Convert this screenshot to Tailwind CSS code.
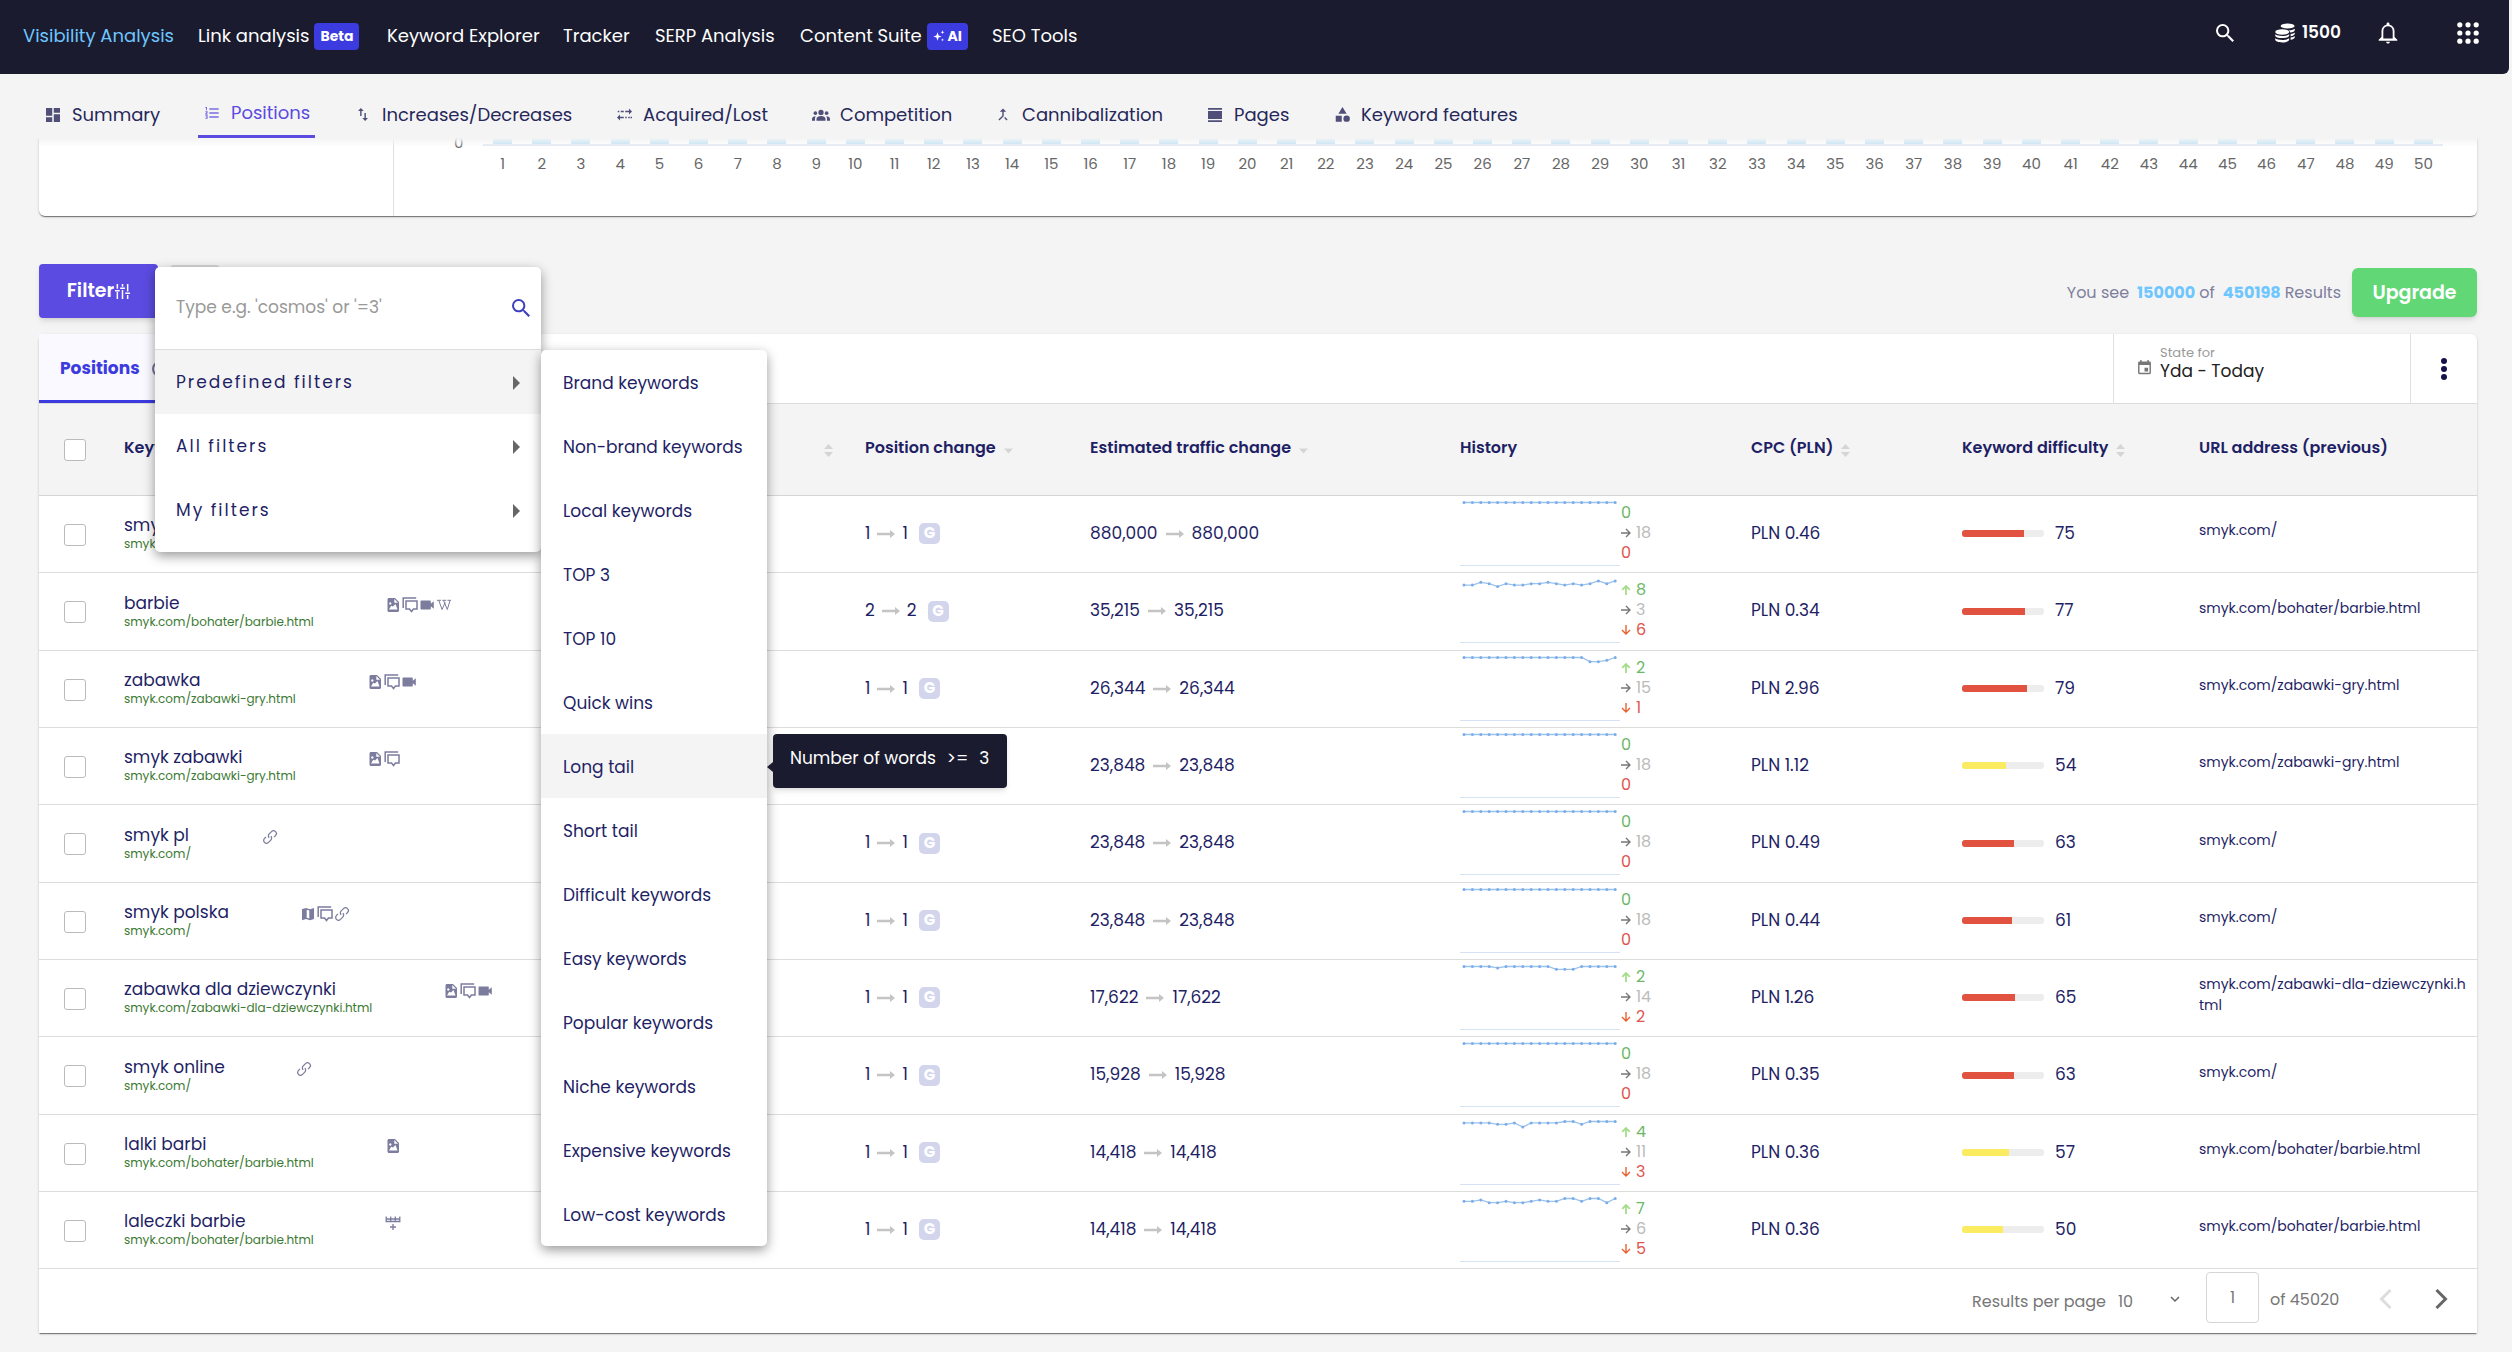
<!DOCTYPE html>
<html lang="en">
<head>
<meta charset="utf-8">
<title>Visibility Analysis – Positions</title>
<script src="https://cdn.jsdelivr.net/npm/@tailwindcss/browser@4"></script>
</head>
<body class="min-h-screen bg-[#f4f4f4] font-['Poppins','Inter',sans-serif] text-[17px] text-[#1f1f66]">

<svg class="hidden" aria-hidden="true">
  <symbol id="search" viewBox="3 3 17.5 17.5"><path d="M15.5 14h-.79l-.28-.27A6.47 6.47 0 0 0 16 9.5 6.5 6.5 0 1 0 9.5 16c1.61 0 3.09-.59 4.23-1.57l.27.28v.79l5 4.99L20.49 19l-4.99-5zm-6 0C7.01 14 5 11.99 5 9.5S7.01 5 9.5 5 14 7.01 14 9.5 11.99 14 9.5 14z"/></symbol>
  <symbol id="coins" viewBox="0 0 20 20"><ellipse cx="12.6" cy="3" rx="7" ry="2.6"/><path d="M14 7.2c2.700 0 5-.6 5.800-1.500v1.200c0 1.300-2 2.300-4.600 2.600-.3-.9-.9-1.600-1.200-2.300zM15.600 11c2-.2 3.600-.8 4.200-1.500v1.200c0 1.200-1.800 2.200-4.200 2.500zM15.600 14.600c2-.2 3.600-.8 4.200-1.500v1.200c0 1.200-1.800 2.200-4.200 2.500z"/><ellipse cx="7.200" cy="9" rx="7" ry="2.700"/><path d="M.2 11.300c1.300 1.200 4 1.700 7 1.700s5.700-.5 7-1.700v1.100c0 1.600-3.100 2.700-7 2.700s-7-1.100-7-2.700zM.2 15.200c1.300 1.200 4 1.700 7 1.700s5.700-.5 7-1.700v1.300c0 1.700-3.100 2.900-7 2.900s-7-1.200-7-2.900z"/></symbol>
  <symbol id="bell" viewBox="0 0 20 22"><path d="M10 .5c.9 0 1.500.6 1.500 1.500v.7c3 .6 5 3.100 5 6.200v6.200l2.800 2.600v1H.7v-1l2.800-2.600V8.900c0-3.100 2-5.600 5-6.200V2c0-.9.600-1.500 1.500-1.500zM5.300 16.500h9.400V9c0-2.700-1.900-4.700-4.700-4.700S5.300 6.300 5.300 9zM8.100 19.700h3.800c0 1-.9 1.800-1.900 1.800s-1.900-.8-1.900-1.800z"/></symbol>
  <symbol id="apps" viewBox="0 0 22 22"><circle cx="2.800" cy="2.800" r="2.600"/><circle cx="11" cy="2.800" r="2.600"/><circle cx="19.200" cy="2.800" r="2.600"/><circle cx="2.800" cy="11" r="2.600"/><circle cx="11" cy="11" r="2.600"/><circle cx="19.200" cy="11" r="2.600"/><circle cx="2.800" cy="19.200" r="2.600"/><circle cx="11" cy="19.200" r="2.600"/><circle cx="19.200" cy="19.200" r="2.600"/></symbol>
  <symbol id="sparkle" viewBox="0 0 12 12"><path d="M4.500 2.200 5.600 5.400 8.600 6.500 5.600 7.600 4.500 10.800 3.400 7.600.3 6.500 3.400 5.400zM9.500.3l.5 1.500 1.500.5-1.500.5-.5 1.500L9 2.800l-1.500-.5L9 1.800zM9.500 8.300l.4 1.200 1.200.4-1.200.4-.4 1.200-.4-1.200-1.200-.4 1.200-.4z"/></symbol>
  <symbol id="dashboard" viewBox="3 3 18 18"><path d="M3 13h8V3H3v10zm0 8h8v-6H3v6zm10 0h8V11h-8v10zm0-18v6h8V3h-8z"/></symbol>
  <symbol id="list" viewBox="2 3 20 18"><path d="M2 17h2v.5H3v1h1v.5H2v1.500h3.500V15.500H2zm1-9h1.500V3H2v1.500h1zm-1 3h1.800L2 13.100V14.500h3.500V13H4l1.500-1.900V9.500H2zM8 5v2h14V5zm0 14h14v-2H8zm0-6h14v-2H8z"/></symbol>
  <symbol id="updown" viewBox="5 3 14 18"><path d="M16 17.010V10h-2v7.010h-3L15 21l4-3.990h-3zM9 3L5 6.990h3V14h2V6.990h3L9 3z"/></symbol>
  <symbol id="exchange" viewBox="2 4 20 16"><path d="M22 8l-4-4v3h-5v2h5v3zM2 16l4 4v-3h5v-2H6v-3zM3 7h2v2H3zM7 7h4v2H7zM13 15h2v2h-2zM17 15h2v2h-2zM20 15h2v2h-2z"/></symbol>
  <symbol id="people" viewBox="0 4 24 15"><circle cx="12" cy="8" r="3.500"/><circle cx="4.500" cy="9" r="2.400"/><circle cx="19.500" cy="9" r="2.400"/><path d="M6 19v-2.500c0-2.300 2.700-3.800 6-3.800s6 1.500 6 3.800V19zM0 19v-2.300c0-2 2-3.300 5-3.400-.7.900-1 1.900-1 3.200V19zM24 19v-2.300c0-2-2-3.300-5-3.400.7.900 1 1.900 1 3.200V19z"/></symbol>
  <symbol id="merge" viewBox="5 3 14 18"><path d="M17 20.410L18.410 19 15 15.590 13.590 17 17 20.410zM7.500 8H11v5.590L5.590 19 7 20.410l6-6V8h3.500L12 3.500 7.500 8z"/></symbol>
  <symbol id="pages" viewBox="3 3 18 18"><path d="M3 3h18v2.200H3zM3 18.800h18V21H3zM3 7h18v10H3z"/></symbol>
  <symbol id="shapes" viewBox="2 2 20 20"><path d="M12 2l5.500 9h-11zM3 13.500h8v8H3z"/><circle cx="17.500" cy="17.500" r="4.300"/></symbol>
  <symbol id="sliders" viewBox="0 0 16 16"><path d="M1.700 0h1.600v5H1.700zM1.700 8.500h1.600V16H1.700zM0 6.300h5v1.700H0zM7.200 0h1.600v3H7.200zM5.500 3.600h5v1.700h-5zM7.200 6.500h1.600V16H7.200zM12.700 0h1.600v8h-1.600zM11 9h5v1.700h-5zM12.700 11.800h1.600V16h-1.600z"/></symbol>
  <symbol id="calendar" viewBox="3 1 18 21"><path d="M17 12h-5v5h5v-5zM16 1v2H8V1H6v2H5a2 2 0 0 0-2 2v14c0 1.100.9 2 2 2h14c1.100 0 2-.9 2-2V5c0-1.100-.9-2-2-2h-1V1h-2zm3 18H5V8h14v11z"/></symbol>
  <symbol id="sort" viewBox="0 0 9 13"><path d="M4.500 0 9 5H0zM4.500 13 9 8H0z"/></symbol>
  <symbol id="sortdown" viewBox="0 0 9 13"><path d="M4.500 11.500 9 6.500H0z"/></symbol>
  <symbol id="arrow" viewBox="0 0 18 8"><path d="M0 2.800h13V0l5 4-5 4V5.200H0z"/></symbol>
  <symbol id="right" viewBox="0 0 10 10"><path d="M0 5h9M5 1l4 4-4 4" fill="none" stroke="currentColor" stroke-width="1.400"/></symbol>
  <symbol id="up" viewBox="0 0 10 10"><path d="M5 10V1M1.200 4.800 5 1l3.800 3.800" fill="none" stroke="currentColor" stroke-width="1.800"/></symbol>
  <symbol id="down" viewBox="0 0 10 10"><path d="M5 0v9M1 5l4 4 4-4" fill="none" stroke="currentColor" stroke-width="1.400"/></symbol>
  <symbol id="image" viewBox="0 0 16 16"><path fill-rule="evenodd" d="M4 1h6l4 4v8.500c0 .8-.7 1.500-1.500 1.500h-8.500c-.8 0-1.500-.7-1.500-1.500v-11C2.500 1.700 3.200 1 4 1zm5.300 1v3.700H13zM4 12.500h8.500L10.500 7 8 9.500 6.200 8.700zM5.300 5.300a1.200 1.200 0 1 0 .01 0z"/></symbol>
  <symbol id="chat" viewBox="0 0 16 16"><path d="M1.200 11V1h13M4 4h11v8h-3.500L9.500 14.500 7.500 12H4z" fill="none" stroke="currentColor" stroke-width="1.500"/></symbol>
  <symbol id="video" viewBox="0 0 16 16"><path d="M2.500 3.500h8.300c.6 0 1 .4 1 1v2.300l3-2.500v7.400l-3-2.500v2.300c0 .6-.4 1-1 1H2.500c-.6 0-1-.4-1-1v-7c0-.6.4-1 1-1z"/></symbol>
  <symbol id="wiki" viewBox="0 0 16 16"><path d="M1 3.300h4M6.300 3.300h4M11.500 3.300H15M2.800 3.300 6 12.500l3.200-7M7.500 3.300l3.800 9.200 2.800-9.200" fill="none" stroke="currentColor"/></symbol>
  <symbol id="link" viewBox="0 0 16 16"><path d="M7.200 8.900a2.800 2.800 0 0 1 0-4l2.300-2.300a2.800 2.800 0 0 1 4 4l-1.400 1.400M8.800 7.100a2.800 2.800 0 0 1 0 4l-2.300 2.300a2.800 2.800 0 0 1-4-4l1.400-1.400" fill="none" stroke="currentColor" stroke-width="1.300"/></symbol>
  <symbol id="map" viewBox="0 0 16 16"><path fill-rule="evenodd" d="M2.500 3 6 2l4 1.200 4-1.200v11l-4 1.300L6 13l-4 1.300V3.200zM6.700 3.700v8l2.600.8v-8z"/></symbol>
  <symbol id="grid" viewBox="0 0 16 16"><path d="M1.200 1.500v5h13.600v-5M5.700 1.500v5M10.300 1.500v5M1.200 4h13.600M8 9v6M5 12h6" fill="none" stroke="currentColor" stroke-width="1.300"/></symbol>
</svg>

<header class="mr-[3px] flex h-[74px] items-center justify-between rounded-br-md bg-[#1a1b2e] pr-[30px] pb-[2px] pl-[23px] text-white">
  <nav class="flex items-center text-lg">
    <a href="#" class="w-[175px] whitespace-nowrap text-[#6ec6ff]">Visibility Analysis</a>
    <a href="#" class="flex w-[189px] items-center gap-[5px] whitespace-nowrap">Link analysis <span class="flex h-[27px] w-[45px] items-center justify-center rounded-[4px] bg-[#3b3be0] text-sm font-bold">Beta</span></a>
    <a href="#" class="w-[176px] whitespace-nowrap">Keyword Explorer</a>
    <a href="#" class="w-[92px] whitespace-nowrap">Tracker</a>
    <a href="#" class="w-[145px] whitespace-nowrap">SERP Analysis</a>
    <a href="#" class="flex w-[192px] items-center gap-[5px] whitespace-nowrap">Content Suite <span class="flex h-[27px] w-[41px] items-center justify-center gap-[3px] rounded-[4px] bg-[#3b3be0] text-sm font-bold"><svg class="size-3 fill-current"><use href="#sparkle"/></svg>AI</span></a>
    <a href="#" class="whitespace-nowrap">SEO Tools</a>
  </nav>
  <div class="flex items-center pb-[7px]">
    <button aria-label="Search" class="mr-[41px]"><svg class="size-[18px] fill-current"><use href="#search"/></svg></button>
    <a href="#" class="mr-[37px] flex items-center gap-[7px] font-semibold"><svg class="size-[20px] fill-current"><use href="#coins"/></svg>1500</a>
    <button aria-label="Notifications" class="mr-[59px]"><svg class="h-[22px] w-5 fill-current"><use href="#bell"/></svg></button>
    <button aria-label="Apps"><svg class="size-[22px] fill-current"><use href="#apps"/></svg></button>
  </div>
</header>

<nav class="flex h-16 items-end pl-[37px] text-lg text-[#26275a]" id="tabs"></nav>

<main class="mr-[35px] ml-[39px]">
  <section class="relative flex h-[78px] overflow-hidden rounded-b-md bg-white shadow-[0_2px_1px_-1px_rgba(0,0,0,0.35),0_1px_1px_rgba(0,0,0,0.2),0_1px_3px_rgba(0,0,0,0.15)] [clip-path:inset(0_-4px_-6px_-4px)]">
    <div class="w-[355px] shrink-0 border-r border-[#e0e0e0]"></div>
    <div class="flex flex-1 pr-[34px] pl-[60px] text-[15px] leading-5 text-[#666]">
      <span class="mt-[-2px] w-[29px] shrink-0 leading-[14px]">0</span>
      <div class="grid h-[38px] flex-1 grid-cols-[repeat(50,minmax(0,1fr))]" id="axis"></div>
    </div>
    <div class="absolute inset-x-0 top-0 h-[9px] bg-linear-to-b from-[#f4f4f4] to-[#f4f4f4]/0"></div>
  </section>

  <div class="relative mt-12 flex h-[70px] items-start justify-between">
    <div class="flex gap-3">
      <button class="flex h-[54px] w-[119px] items-center justify-center gap-px rounded-[4px] bg-[#5b4be0] text-[19px] font-semibold text-white shadow-md">Filter<svg class="size-[15px] fill-current"><use href="#sliders"/></svg></button>
      <button aria-label="Saved filters" class="mt-px h-[52px] w-[50px] rounded-[4px] border-2 border-[#d5d5d5]"></button>
    </div>
    <div class="mt-1 flex items-center gap-[11px]">
      <p class="flex gap-1 text-base text-[#7f7f9d]">You see <b class="ml-1 font-bold text-[#6ec6ff]">150000</b> of <b class="ml-1 font-bold text-[#6ec6ff]">450198</b> Results</p>
      <button class="h-[49px] w-[125px] rounded-md bg-[#62d775] pt-px text-[19px] font-semibold text-white shadow-md">Upgrade</button>
    </div>

    <div class="absolute top-[3px] left-[116px] z-20 w-[386px] rounded-[5px] bg-white pb-[10px] shadow-[0_4px_12px_rgba(0,0,0,0.4)]">
      <label class="flex h-[83px] items-center justify-between border-b border-[#ddd] pr-[11px] pl-[21px]">
        <input type="text" aria-label="Filter phrase" placeholder="Type e.g. 'cosmos' or '=3'" class="mb-px w-[300px] outline-none placeholder:text-[#999]">
        <svg class="size-[18px] fill-[#3b3fc0]"><use href="#search"/></svg>
      </label>
      <button class="flex h-16 w-full items-center justify-between bg-[#f4f4f4] px-[21px] pt-[2px] tracking-[2px]">Predefined filters<svg viewBox="0 0 7 14" class="h-[14px] w-[7px] fill-[#666]"><path d="M0 0l7 7-7 7z"/></svg></button>
      <button class="flex h-16 w-full items-center justify-between px-[21px] pt-[2px] tracking-[2px]">All filters<svg viewBox="0 0 7 14" class="h-[14px] w-[7px] fill-[#666]"><path d="M0 0l7 7-7 7z"/></svg></button>
      <button class="flex h-16 w-full items-center justify-between px-[21px] pt-[2px] tracking-[2px]">My filters<svg viewBox="0 0 7 14" class="h-[14px] w-[7px] fill-[#666]"><path d="M0 0l7 7-7 7z"/></svg></button>

      <div id="submenu" class="absolute top-[83px] left-full w-[226px] rounded-[5px] bg-white shadow-[0_4px_12px_rgba(0,0,0,0.4)]"></div>
      <div role="tooltip" class="absolute top-[467px] left-[618px] flex h-[54px] w-[234px] items-center gap-[11px] rounded-[4px] bg-[#1a1b2e] pb-1 pl-[17px] whitespace-nowrap text-white shadow-md"><span>Number of words</span><span>&gt;=</span><span>3</span><span class="absolute top-[28px] left-[-6px] border-y-[5px] border-r-[6px] border-y-transparent border-r-[#1a1b2e]"></span></div>
    </div>
  </div>

  <section class="rounded-t-md bg-white shadow-[0_2px_1px_-1px_rgba(0,0,0,0.35),0_1px_1px_rgba(0,0,0,0.2),0_1px_3px_rgba(0,0,0,0.15)]">
    <div class="flex h-[70px] border-b border-[#ddd]">
      <button class="flex w-[137px] items-center gap-3 border-b-[3px] border-[#3b3be0] bg-[#f9f9ff] pt-[3px] pl-[21px] font-bold text-[#3b3be0]">Positions<span class="size-4 shrink-0 rounded-full border-2 border-[#77779a]"></span></button>
      <div class="ml-auto flex w-[298px] items-center gap-[9px] border-x border-[#e0e0e0] pl-[24px]">
        <svg class="mt-[-3px] h-[15px] w-[13px] fill-[#777]"><use href="#calendar"/></svg>
        <div class="pb-[14px] leading-[18px] text-[#222]"><div class="text-[13px] text-[#999]">State for</div><div>Yda - Today</div></div>
      </div>
      <button aria-label="More" class="flex w-[66px] items-center justify-center"><svg viewBox="0 0 6 22" class="h-[22px] w-[6px] fill-[#14144a]"><circle cx="3" cy="3" r="3"/><circle cx="3" cy="11" r="3"/><circle cx="3" cy="19" r="3"/></svg></button>
    </div>
    <table class="w-full table-fixed border-collapse text-left">
      <colgroup><col class="w-[85px]"><col><col class="w-[225px]"><col class="w-[370px]"><col class="w-[291px]"><col class="w-[211px]"><col class="w-[237px]"><col class="w-[278px]"></colgroup>
      <thead class="bg-[#f4f4f4] text-base whitespace-nowrap">
        <tr class="h-[91px] border-b border-[#d5d5d5]">
          <th class="pt-[2px] pl-[25px]"><input type="checkbox" aria-label="Select all" class="block size-[22px] appearance-none rounded-[3px] border border-[#bbb] bg-white"></th>
          <th class="pb-[2px] font-semibold"><div class="flex items-center justify-between pr-[32px]">Keywords<svg class="mt-1 h-[13px] w-[9px] fill-[#d5d5d5]"><use href="#sort"/></svg></div></th>
          <th class="pb-[2px] font-semibold"><div class="flex items-center gap-2">Position change<svg class="h-[13px] w-[9px] fill-[#d5d5d5]"><use href="#sortdown"/></svg></div></th>
          <th class="pb-[2px] font-semibold"><div class="flex items-center gap-2">Estimated traffic change<svg class="h-[13px] w-[9px] fill-[#d5d5d5]"><use href="#sortdown"/></svg></div></th>
          <th class="pb-[2px] font-semibold">History</th>
          <th class="pb-[2px] font-semibold"><div class="flex items-center gap-2">CPC (PLN)<svg class="mt-1 h-[13px] w-[9px] fill-[#d5d5d5]"><use href="#sort"/></svg></div></th>
          <th class="pb-[2px] font-semibold"><div class="flex items-center gap-2">Keyword difficulty<svg class="mt-1 h-[13px] w-[9px] fill-[#d5d5d5]"><use href="#sort"/></svg></div></th>
          <th class="pb-[2px] font-semibold">URL address (previous)</th>
        </tr>
      </thead>
      <tbody id="rows"></tbody>
    </table>
    <div class="flex h-16 items-start justify-end pt-px pr-[29px] text-base text-[#777]">
      <label for="size" class="mt-[20px]">Results per page</label>
      <div class="relative mt-[20px] ml-3 w-[62px]">
        <select id="size" class="w-full appearance-none bg-transparent"><option>10</option></select>
        <svg viewBox="0 0 10 7" class="pointer-events-none absolute top-[6px] right-0 h-[7px] w-[10px]"><path d="M1 1l4 4 4-4" fill="none" stroke="#666" stroke-width="1.500"/></svg>
      </div>
      <input aria-label="Page" value="1" class="mt-[2px] ml-[26px] h-[51px] w-[53px] rounded-[4px] border border-[#d5d5d5] text-center">
      <span class="mt-[18px] ml-[11px] w-[109px]">of 45020</span>
      <button aria-label="Previous page" class="mt-[19px] mr-[43px]"><svg viewBox="0 0 13 20" class="h-5 w-[13px]"><path d="M11.500 1 2.500 10l9 9" fill="none" stroke="#ddd" stroke-width="3"/></svg></button>
      <button aria-label="Next page" class="mt-[19px]"><svg viewBox="0 0 13 20" class="h-5 w-[13px]"><path d="M1.500 1l9 9-9 9" fill="none" stroke="#666" stroke-width="3"/></svg></button>
    </div>
  </section>
</main>

<script>
const html = (id, s) => { document.getElementById(id).innerHTML = s; };

const tabs = [
  ['Summary', 'dashboard', 'size-[14px]', 'w-[161px]'],
  ['Positions', 'list', 'h-[12px] w-[14px]', 'w-[117px]'],
  ['Increases/Decreases', 'updown', 'h-[13px] w-[10px]', 'w-[261px]'],
  ['Acquired/Lost', 'exchange', 'h-[13px] w-[15px]', 'w-[197px]'],
  ['Competition', 'people', 'h-[12px] w-[18px]', 'w-[182px]'],
  ['Cannibalization', 'merge', 'h-[13px] w-[10px]', 'w-[212px]'],
  ['Pages', 'pages', 'size-[14px]', 'w-[127px]'],
  ['Keyword features', 'shapes', 'size-[15px]', 'w-[200px]']
];
html('tabs', tabs.map(([label, icon, size, width]) => {
  const active = label === 'Positions';
  return `<a href="#" class="flex h-[50px] items-center gap-[10px] pt-[3px] whitespace-nowrap ${width} ${active ? 'mr-[32px] border-b-[3px] border-[#5b4be0] pl-[5px] text-[#5b4be0]' : 'pl-[7px]'}"><span class="flex w-[18px] shrink-0 justify-center"><svg class="fill-current opacity-80 ${size}"><use href="#${icon}"/></svg></span>${label}</a>`;
}).join(''));

html('axis', Array.from({length: 50}, (_, i) =>
  `<div class="flex flex-col items-center text-center"><i class="h-[6px] w-[19px] shrink-0 bg-[#b9e1f6]"></i><i class="mb-[8px] h-[2px] w-full shrink-0 bg-[#e3e8f3]"></i><span>${i + 1}</span></div>`).join(''));

const filters = ['Brand keywords', 'Non-brand keywords', 'Local keywords', 'TOP 3', 'TOP 10', 'Quick wins', 'Long tail', 'Short tail', 'Difficult keywords', 'Easy keywords', 'Popular keywords', 'Niche keywords', 'Expensive keywords', 'Low-cost keywords'];
html('submenu', filters.map(f => `<button class="block h-16 w-full pt-[3px] pl-[22px] text-left whitespace-nowrap ${f === 'Long tail' ? 'bg-[#f4f4f4]' : ''}">${f}</button>`).join(''));

const flat = Array(19).fill(0);
const rows = [
  ['smyk', 'smyk.com/', [], 1, '880,000', flat, 0, 18, 0, '0.46', 75],
  ['barbie', 'smyk.com/bohater/barbie.html', ['image', 'chat', 'video', 'wiki'], 2, '35,215', [4,4,2,3,5,3,4,4,3,3,2,3,4,3,4,3,1,3,1], 8, 3, 6, '0.34', 77],
  ['zabawka', 'smyk.com/zabawki-gry.html', ['image', 'chat', 'video'], 1, '26,344', [0,0,0,0,0,0,0,0,0,0,0,0,0,0,0,3,3,2,0], 2, 15, 1, '2.96', 79],
  ['smyk zabawki', 'smyk.com/zabawki-gry.html', ['image', 'chat'], 1, '23,848', flat, 0, 18, 0, '1.12', 54],
  ['smyk pl', 'smyk.com/', ['link'], 1, '23,848', flat, 0, 18, 0, '0.49', 63],
  ['smyk polska', 'smyk.com/', ['map', 'chat', 'link'], 1, '23,848', flat, 0, 18, 0, '0.44', 61],
  ['zabawka dla dziewczynki', 'smyk.com/zabawki-dla-dziewczynki.html', ['image', 'chat', 'video'], 1, '17,622', [0,0,0,0,1,0,0,0,0,0,0,2,2,2,0,0,0,0,0], 2, 14, 2, '1.26', 65],
  ['smyk online', 'smyk.com/', ['link'], 1, '15,928', flat, 0, 18, 0, '0.35', 63],
  ['lalki barbi', 'smyk.com/bohater/barbie.html', ['image'], 1, '14,418', [1,1,1,1,2,2,1,4,1,1,1,1,0,0,2,0,0,0,0], 4, 11, 3, '0.36', 57],
  ['laleczki barbie', 'smyk.com/bohater/barbie.html', ['grid'], 1, '14,418', [2,2,1,3,3,2,3,3,2,1,2,2,0,0,2,0,0,3,0], 7, 6, 5, '0.36', 50]
];
const arrow = '<svg class="h-2 w-[18px] fill-[#c4c4c4]"><use href="#arrow"/></svg>';
const spark = levels => {
  const pts = levels.map((l, i) => [4 + i * 8.4, 2.5 + l * 1.4]);
  return `<svg viewBox="0 0 160 66" class="mt-1 h-[66px] w-[160px]"><path d="M0 65.500h160" stroke="#d5e3f5"/><polyline points="${pts.map(p => p.join()).join(' ')}" fill="none" stroke="#9cc2ee" stroke-width="1.300"/>${pts.map(p => `<circle cx="${p[0]}" cy="${p[1]}" r="1.500" fill="#7badE8"/>`).join('')}</svg>`;
};
const count = (n, icon, tone, iconTone) => `<div class="flex items-center gap-[5px] ${tone}">${n ? `<svg class="size-[10px] ${iconTone}"><use href="#${icon}"/></svg>` : ''}${n}</div>`;

html('rows', rows.map(([kw, url, icons, pos, traffic, hist, up, same, down, cpc, kd]) => `
<tr class="h-[77px] border-b border-[#ddd] nth-[3n+2]:h-[78px]">
  <td class="pl-[25px]"><input type="checkbox" aria-label="Select ${kw}" class="mt-[2px] block size-[22px] appearance-none rounded-[3px] border border-[#bbb]"></td>
  <td><div class="flex items-start gap-[71px] whitespace-nowrap">
    <div><div class="text-[17px] leading-5">${kw}</div><a href="#" class="block text-xs leading-[17px] text-[#3c7a33]">${url}</a></div>
    <div class="mt-1 flex gap-px text-[#7c7c9e]">${icons.map(i => `<svg class="size-4 fill-current"><use href="#${i}"/></svg>`).join('')}</div></div></td>
  <td><div class="flex items-center gap-[7px]">${pos}${arrow}${pos}<span class="ml-1 flex size-[21px] items-center justify-center rounded-[5px] bg-[#d3d5ed] text-[15px] font-bold text-white">G</span></div></td>
  <td><div class="flex items-center gap-2">${traffic}${arrow}${traffic}</div></td>
  <td class="p-0 align-top"><div class="flex h-[76px]">${spark(hist)}<div class="mt-[7px] ml-px text-base leading-5">${count(up, 'up', 'text-[#6cb868]', 'text-[#a5dd8a]')}${count(same, 'right', 'text-[#bbb]', 'text-[#777]')}${count(down, 'down', 'text-[#e0554e]', 'text-[#e8622f]')}</div></div></td>
  <td>PLN ${cpc}</td>
  <td><div class="flex items-center gap-[11px]"><div class="h-[7px] w-[82px] overflow-hidden rounded-[3px] bg-[#ededed]"><div class="h-full ${kd > 60 ? 'bg-[#e15241]' : 'bg-[#fbeb60]'}" style="width:${kd}%"></div></div>${kd}</div></td>
  <td class="pr-[10px] pb-[6px] text-sm leading-[21px] break-all">${url}</td>
</tr>`).join(''));
</script>
</body>
</html>
